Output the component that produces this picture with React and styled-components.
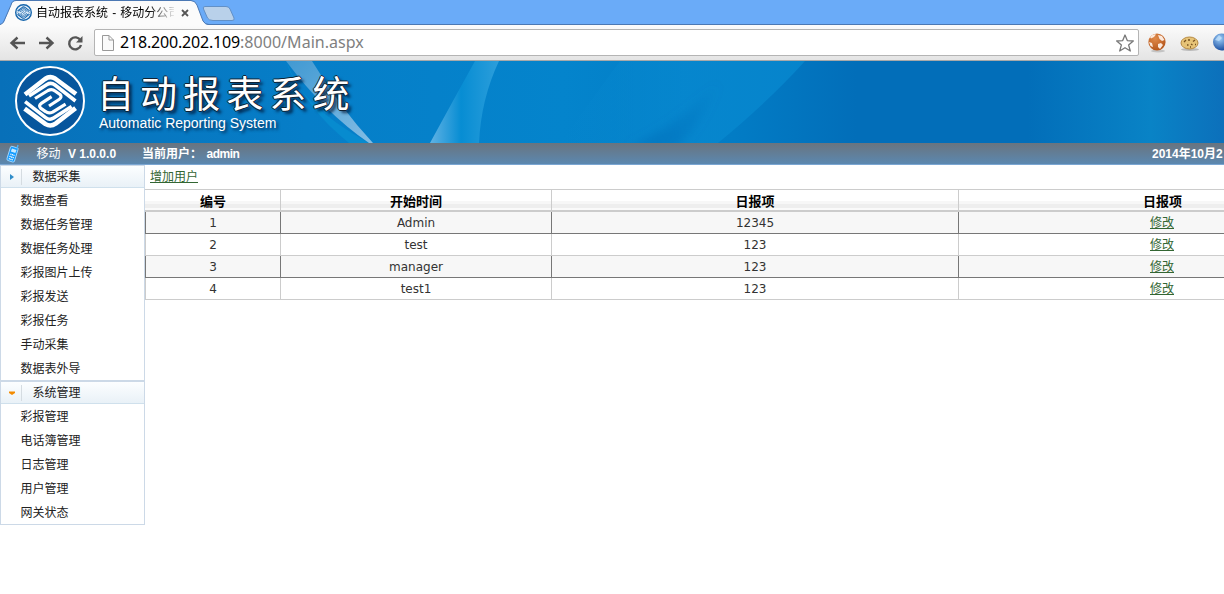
import React from "react";
import styled, { createGlobalStyle } from "styled-components";

const Global = createGlobalStyle`
  * { box-sizing: border-box; }
  html, body { margin: 0; padding: 0; height: 594px; overflow: hidden; background: #fff; }
  body { font: 12px/24px "Liberation Sans", "Noto Sans CJK SC", sans-serif; color: #222; }
  svg { display: block; flex: none; }
`;
const Window = styled.div`
  width: 1224px; height: 594px; overflow: hidden; display: flex; flex-direction: column;
`;

/* Browser chrome */
const TabStrip = styled.div`
  height: 25px; flex: none; background: #6aabf8; position: relative; display: flex;
  border-bottom: 1px solid #4b78b3;
`;
const TabShapes = styled.svg`
  position: absolute; left: 0; top: 0;
`;
const Tab = styled.div`
  position: relative; display: flex; align-items: center; width: 206px; height: 25px; padding-left: 15px;
`;
const TabTitle = styled.span`
  margin-left: 4px; width: 138px; height: 25px; line-height: 27px; overflow: hidden; white-space: nowrap; color: #000;
  word-spacing: 0.8px;
  mask-image: linear-gradient(90deg, #000 112px, transparent 141px);
`;
const TabClose = styled.svg`
  margin-left: 7px;
`;
const Toolbar = styled.div`
  height: 36px; flex: none; display: flex; align-items: center; padding-left: 9px;
  background: linear-gradient(#fbfbfb, #e4e4e4); border-bottom: 1px solid #a9a9a9;
`;
const NavIcons = styled.svg`
  margin-right: 10px;
`;
const AddressBar = styled.div`
  width: 1045px; height: 27px; flex: none; border: 1px solid #b4b4b4; border-radius: 2px; background: #fff;
  display: flex; align-items: center; padding: 0 4px 0 6px;
`;
const Url = styled.span`
  flex: 1; margin-left: 6px; font: 16px/23px "Noto Sans", sans-serif; letter-spacing: 0.04px; color: #808080;
`;
const Host = styled.span`
  color: #000; letter-spacing: -0.18px;
`;
const Extensions = styled.svg`
  margin-left: 7px;
`;

/* Banner */
const Banner = styled.header`
  height: 82px; flex: none; position: relative; display: flex; overflow: hidden; padding-left: 14px;
`;
const BannerArt = styled.svg`
  position: absolute; left: 0; top: 0;
`;
const BrandLogo = styled.svg`
  position: relative; margin-top: 4px;
`;
const BrandText = styled.div`
  position: relative; margin-left: 12px; color: #fff; white-space: nowrap;
`;
const BrandName = styled.div`
  font: 37px/44px "Noto Sans CJK SC", sans-serif; letter-spacing: 6.1px; height: 44px; margin: 9px 0 0 -1px;
  text-shadow: 1px 0 0 #123, -1px 0 0 #123, 0 1px 0 #123, 0 -1px 0 #123, 3px 3px 3px rgba(0, 20, 50, 0.8);
`;
const BrandSub = styled.div`
  font: 14px/16px "Liberation Sans", sans-serif; margin: 1px 0 0 1px;
  text-shadow: 2px 2px 3px rgba(0, 20, 50, 0.8);
`;
const StatusBar = styled.div`
  height: 22px; flex: none; display: flex; align-items: center; padding-left: 5px; color: #fff;
  font-weight: bold; line-height: 20px; white-space: nowrap;
  background: linear-gradient(#69747f, #5b88b0); border-bottom: 1px solid #7ba6d2;
`;
const StatusText = styled.span`
  margin-left: ${(p) => p.$gap}px; font-weight: ${(p) => (p.$light ? 400 : 700)};
  letter-spacing: ${(p) => p.$tracking || 0}px;
`;
const StatusDate = styled.span`
  width: 72px; margin-left: auto; overflow: hidden;
`;

/* Page */
const Page = styled.div`
  display: flex; flex: 1; min-height: 0;
`;
const Sidebar = styled.nav`
  width: 145px; flex: none; align-self: flex-start; border: 1px solid #ccd9e7; border-top: 0;
`;
const MenuGroup = styled.section`
  & + & { border-top: 1px solid #ccd9e7; }
`;
const MenuHeader = styled.div`
  height: 23px; display: flex; align-items: center; color: #222;
  border-top: 1px solid #ccd9e7; border-bottom: 1px solid #cfe0ec; background: linear-gradient(#fcfeff, #e9f1f7);
`;
const MenuLabel = styled.span`
  line-height: 19px; padding-top: 2px;
`;
const MenuItem = styled.div`
  height: 24px; line-height: 26px; padding-left: 19.4px; color: #222;
`;
const Content = styled.main`
  flex: 1; min-width: 0; overflow: hidden;
`;
const ActionLine = styled.div`
  height: 24px; padding-left: 5px; line-height: 25px;
`;
const Link = styled.a`
  color: #336633; text-decoration: underline; text-underline-offset: 1px; cursor: pointer;
`;
const Table = styled.div`
  width: 1221px; border-top: 1px solid #ccc;
`;
const HeadRow = styled.div`
  display: grid; grid-template-columns: 135px 271px 407px 408px; height: 22px; border-bottom: 2px solid #ccc;
  background: linear-gradient(#fff 11px, #f7f7f7 11px 14px, #eee 14px 18px, #fafafa 18px);
`;
const HeadCell = styled.div`
  border-left: 1px solid ${(p) => (p.$first ? "transparent" : "#ccc")}; text-align: center; color: #000;
  font-weight: bold; font-size: 13px; line-height: 23px;
`;
const Row = styled.div`
  display: grid; grid-template-columns: 135px 271px 407px 407px; height: 22px;
  --line: ${(p) => (p.$shaded ? "#777" : "#ccc")};
  background: ${(p) => (p.$shaded ? "#f7f7f7" : "#fff")}; border-bottom: 1px solid var(--line);
`;
const Cell = styled.div`
  border-left: 1px solid var(--line); text-align: center; line-height: 22px; color: #333;
  font-family: "DejaVu Sans", "Noto Sans CJK SC", sans-serif;
`;

function EmblemHalf(props) {
  return (
    <g {...props}>
      <path d="M11 29.500 31 14Q36 10.500 41 13.500L62 29" strokeWidth="4.600" />
      <path d="M15 31 33 19.500Q37 17 41 20L61.500 36" strokeWidth="3.600" />
      <path d="M21 33.500 34 25.500Q38 23.500 41 26L46 29.500Q48.500 32 45 34.500L35 41" strokeWidth="3.200" />
    </g>
  );
}
function Emblem({ color }) {
  return (
    <g fill="none" stroke={color} strokeLinejoin="round">
      <EmblemHalf />
      <EmblemHalf transform="rotate(180 36.300 36.300)" />
    </g>
  );
}

const groups = [
  { title: "数据采集", open: false, items: ["数据查看", "数据任务管理", "数据任务处理", "彩报图片上传", "彩报发送", "彩报任务", "手动采集", "数据表外导"] },
  { title: "系统管理", open: true, items: ["彩报管理", "电话簿管理", "日志管理", "用户管理", "网关状态"] },
];
const rows = [
  ["1", "Admin", "12345"],
  ["2", "test", "123"],
  ["3", "manager", "123"],
  ["4", "test1", "123"],
];

export default function App() {
  return (
    <Window>
      <Global />
      <TabStrip>
        <TabShapes width="260" height="25">
          <path d="M0 25 4 22 11 5Q12 1 16 1H191Q195 1 197 5L203 21Q205 25 209 25Z" fill="#fbfbfb" />
          <path d="M0 24.5Q3 24 4 21L11 5Q12 .5 16 .5H191Q195 .5 197 5L203 21Q205 24.5 209 24.5" fill="none" stroke="#4b78b3" />
          <path d="M205 6.5H226Q229 6.500 230 9L234 18Q235 20.500 232 20.500H213Q209 20.500 207.500 18L203.500 9Q202.500 6.500 205 6.500Z" fill="#b9d1ea" stroke="#6290c6" />
        </TabShapes>
        <Tab>
          <svg width="17" height="17" viewBox="0 0 72 72">
            <circle cx="36" cy="36" r="33" fill="#e4effa" stroke="#1766ac" strokeWidth="6" />
            <Emblem color="#1766ac" />
          </svg>
          <TabTitle>自动报表系统 - 移动分公司</TabTitle>
          <TabClose width="8" height="8"><path d="M1 1 7 7M7 1 1 7" stroke="#555" strokeWidth="1.8" /></TabClose>
        </Tab>
      </TabStrip>
      <Toolbar>
        <NavIcons width="75" height="18" fill="none" stroke="#555" strokeWidth="2.4">
          <path d="M16 9H3M8.500 3.500 2.500 9 8.500 14.500M30 9H43M37.500 3.500 43.500 9 37.500 14.500" />
          <path d="M71.500 6.500A6 6 0 1 0 72 11" />
          <path d="M73.500 2V8.500H67Z" fill="#555" stroke="none" />
        </NavIcons>
        <AddressBar>
          <svg width="13" height="16" fill="#fafafa" stroke="#999"><path d="M1.500 .5H8L12.500 5V15.500H1.500ZM8 .5V5H12.500" /></svg>
          <Url><Host>218.200.202.109</Host>:8000/Main.aspx</Url>
          <svg width="18" height="18" fill="#fff" stroke="#777" strokeWidth="1.300" strokeLinejoin="round">
            <path d="M9 1 11.300 6.600 17.300 7 12.600 10.900 14.300 17 9 13.700 3.700 17 5.400 10.900 .7 7 6.700 6.600Z" />
          </svg>
        </AddressBar>
        <Extensions width="78" height="22">
          <defs>
            <radialGradient id="globe" cx=".4" cy=".3" r=".75"><stop offset="0" stopColor="#e08a4a" /><stop offset="1" stopColor="#b3541a" /></radialGradient>
            <radialGradient id="ball" cx=".4" cy=".3" r=".75"><stop offset="0" stopColor="#9fd0fa" /><stop offset="1" stopColor="#12469b" /></radialGradient>
          </defs>
          <ellipse cx="12" cy="19" rx="7" ry="1.500" fill="#aaa" opacity=".6" />
          <circle cx="11" cy="10" r="8.600" fill="url(#globe)" />
          <path d="M4 5Q7 1.500 10 2.500L8 5 5 6.500ZM12 3 16 4 18.500 8 16 9 13.500 7ZM3 10 6 11 7 15 4.500 14ZM12 12 15 11 17 13 14 17 12 15Z" fill="#fbe9dd" />
          <ellipse cx="44" cy="17.500" rx="9" ry="1.500" fill="#999" opacity=".6" />
          <ellipse cx="43.500" cy="11" rx="8.500" ry="6" fill="#e6c377" stroke="#b78a42" />
          <path d="M38 10 40 8M42 8H44M47 9.500 49 8M41 13H42.500M45 12 46.500 13M49 12.500H50M44 15H45" stroke="#76501f" strokeWidth="1.300" />
          <circle cx="75.500" cy="10" r="8.500" fill="url(#ball)" />
          <path d="M69 8 73 3 76 6 73 9Z" fill="#c7e4fc" opacity=".7" />
        </Extensions>
      </Toolbar>

      <Banner>
        <BannerArt width="1224" height="82">
          <defs>
            <linearGradient id="sky"><stop offset="0" stopColor="#0870b9" /><stop offset=".25" stopColor="#067ec8" /><stop offset=".46" stopColor="#0484cc" /><stop offset=".6" stopColor="#027cc5" /><stop offset=".7" stopColor="#026eb9" /><stop offset=".84" stopColor="#026eb9" /><stop offset=".94" stopColor="#0983c6" /><stop offset="1" stopColor="#0c70bb" /></linearGradient>
            <linearGradient id="ray"><stop offset="0" stopColor="#60b2e4" /><stop offset=".45" stopColor="#078dd3" /><stop offset="1" stopColor="#2c9edb" /></linearGradient>
            <linearGradient id="beam" x1="0" y1="0" x2="1" y2="1"><stop offset="0" stopColor="#4199d2" /><stop offset="1" stopColor="#83bde4" /></linearGradient>
            <linearGradient id="glow"><stop offset="0" stopColor="#0788cf" stopOpacity="0" /><stop offset=".5" stopColor="#0788cf" /><stop offset="1" stopColor="#0788cf" /></linearGradient>
            <linearGradient id="shade" x1="0" y1="1" x2="1" y2="0"><stop offset="0" stopColor="#026fba" stopOpacity=".7" /><stop offset="1" stopColor="#026fba" stopOpacity="0" /></linearGradient>
            <filter id="soft" x="-20%" y="-20%" width="140%" height="140%"><feGaussianBlur stdDeviation="5" /></filter>
          </defs>
          <rect width="1224" height="82" fill="url(#sky)" />
          <path d="M286 0Q298 43 369 82H349Q306 48 286 0Z" fill="#078bcf" />
          <path d="M286 0H312Q341 48 373 82H369Q325 52 286 0Z" fill="url(#beam)" />
          <path d="M475 0H499Q481 38 479 82H430Q454 38 475 0Z" fill="url(#ray)" />
          <path d="M560 82 620 0H805Q770 39 718 82Z" fill="url(#glow)" opacity=".8" />
          <path d="M630 86Q675 66 720 20 704 58 678 86Z" fill="url(#shade)" filter="url(#soft)" />
        </BannerArt>
        <BrandLogo width="72" height="72" viewBox="0 0 72 72">
          <circle cx="36" cy="36" r="34" fill="#07569d" stroke="#fff" strokeWidth="2" />
          <Emblem color="#fff" />
        </BrandLogo>
        <BrandText>
          <BrandName>自动报表系统</BrandName>
          <BrandSub>Automatic Reporting System</BrandSub>
        </BrandText>
      </Banner>

      <StatusBar>
        <svg width="15" height="20" viewBox="0 0 15 20">
          <path d="M5.500 3Q6 2 7 2.300L12.500 4Q13.500 4.500 13 5.500L9.500 17Q9 18.500 7.500 18L3 16.500Q1.500 16 2 14.500Z" fill="#149cff" stroke="#9fd6ff" />
          <path d="M12 4.500 13 1" stroke="#48b5ff" strokeWidth="1.400" />
          <path d="M7 4.500 11.500 6 10.300 9 5.800 7.600Z" fill="#c9eaff" />
          <path d="M5.300 10 9.500 11.500M4.500 12.300 8.700 13.800M3.800 14.600 7.800 16" stroke="#fff" strokeWidth="1.300" strokeDasharray="1.200 .5" />
        </svg>
        <StatusText $gap={16.5} $light>移动</StatusText>
        <StatusText $gap={7.5}>V 1.0.0.0</StatusText>
        <StatusText $gap={26}>当前用户：</StatusText>
        <StatusText $gap={4.5} $tracking={-0.5}>admin</StatusText>
        <StatusDate>2014年10月2日</StatusDate>
      </StatusBar>

      <Page>
        <Sidebar>
          {groups.map((g) => (
            <MenuGroup key={g.title}>
              <MenuHeader>
                <svg width="31.4" height="21">
                  {g.open ? <path d="M8 9.500H14V11L11 13 8 11Z" fill="#f38b00" /> : <path d="M9 8 13 11 9 14Z" fill="#2e8cc9" />}
                  <path d="M20.500 3V19" stroke="#d5dce1" />
                </svg>
                <MenuLabel>{g.title}</MenuLabel>
              </MenuHeader>
              {g.items.map((item) => <MenuItem key={item}>{item}</MenuItem>)}
            </MenuGroup>
          ))}
        </Sidebar>
        <Content>
          <ActionLine><Link>增加用户</Link></ActionLine>
          <Table>
            <HeadRow>
              {["编号", "开始时间", "日报项", "日报项"].map((label, i) => <HeadCell key={i} $first={i === 0}>{label}</HeadCell>)}
            </HeadRow>
            {rows.map((row, i) => (
              <Row key={row[0]} $shaded={i % 2 === 0}>
                {row.map((value, c) => <Cell key={c}>{value}</Cell>)}
                <Cell><Link>修改</Link></Cell>
              </Row>
            ))}
          </Table>
        </Content>
      </Page>
    </Window>
  );
}
